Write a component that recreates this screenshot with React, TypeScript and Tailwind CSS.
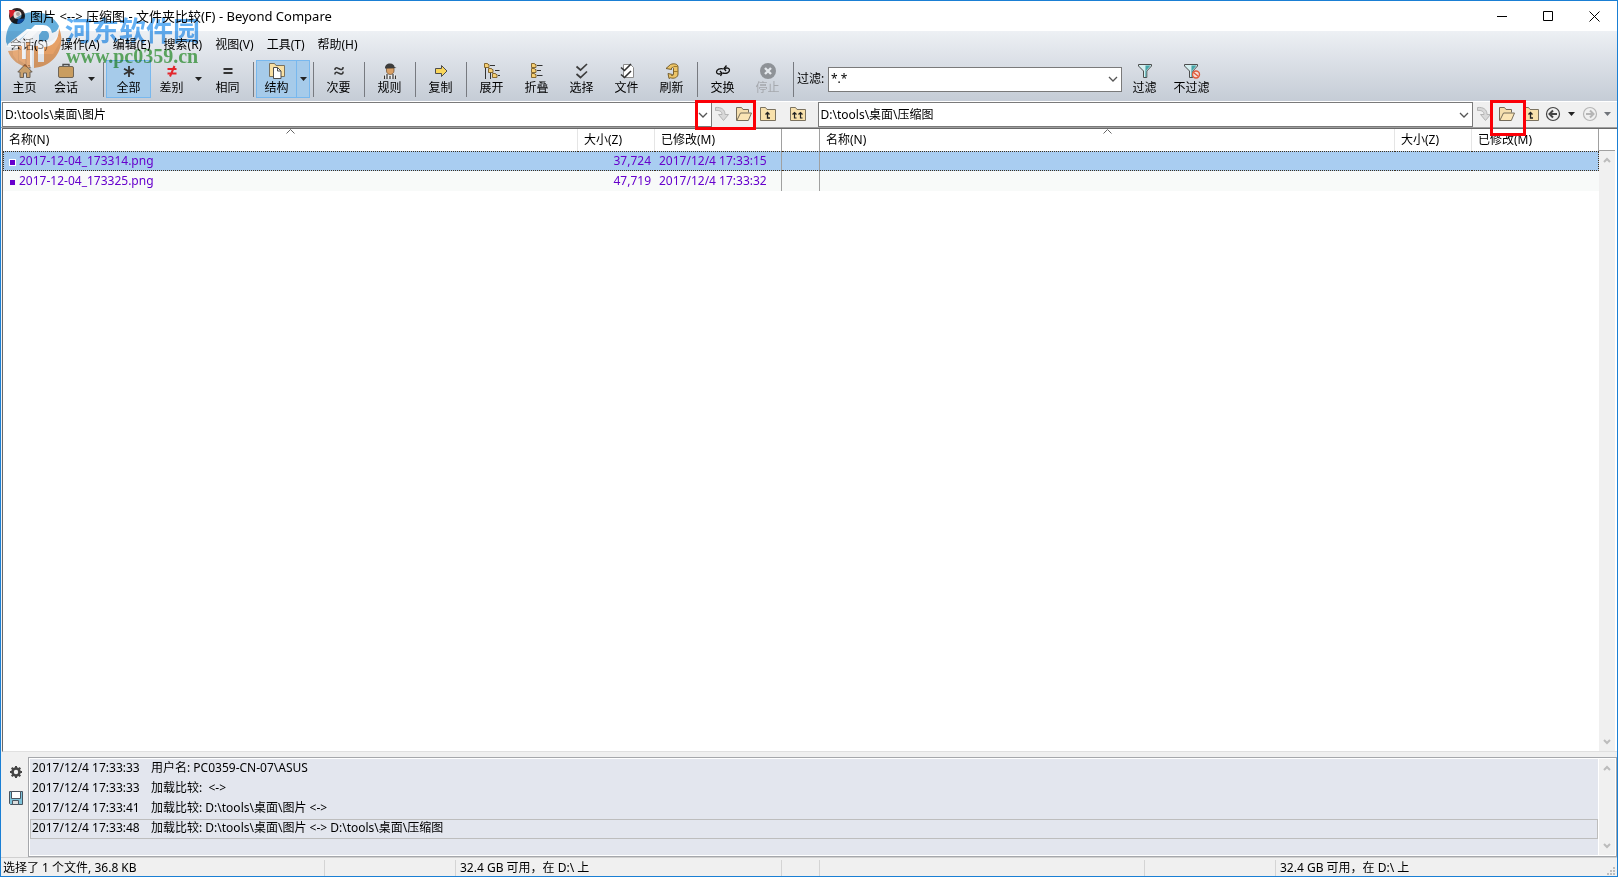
import React from "react";

const OUT = "#4d4d4d";

function Svg({ w = 16, h = 16, children }: { w?: number; h?: number; children: React.ReactNode }) {
  return (
    <svg width={w} height={h} viewBox={`0 0 ${w} ${h}`} fill="none" aria-hidden="true" className="shrink-0">
      {children}
    </svg>
  );
}

const icons = {
  home: (
    <Svg>
      <path d="M8 1.5L15.2 9H13v5.500H9.500V10h-3v4.500H3V9H.8z" fill="#c9a06c" stroke="#6a6055" />
      <path d="M11 2.500h2v3" stroke="#6a6055" />
    </Svg>
  ),
  briefcase: (
    <Svg>
      <path d="M5 3.500V1.500h6v2" stroke={OUT} strokeWidth="1.400" />
      <rect x=".5" y="3.500" width="15" height="11" rx="1.500" fill="#c99d60" stroke="#6f6557" />
    </Svg>
  ),
  star: (
    <Svg>
      <path d="M8 3v11M3 5.800l10 5.400M13 5.800L3 11.200" stroke="#333" strokeWidth="1.800" />
    </Svg>
  ),
  notEqual: (
    <Svg>
      <path d="M3.500 6h9M3.500 10.500h9M10.500 3L6 13.500" stroke="#e3262c" strokeWidth="2" />
    </Svg>
  ),
  equal: (
    <Svg>
      <path d="M3.500 6h9M3.500 10h9" stroke="#333" strokeWidth="2" />
    </Svg>
  ),
  structure: (
    <Svg>
      <path d="M.5 13.500v-13h5l1.500 2h8.500v11z" fill="#f8dfa2" stroke="#7b725f" />
      <path d="M4.500 4.500h4l3.500 3.500v7.500H4.500z" fill="#fff" stroke={OUT} />
      <path d="M8.500 4.500V8H12" stroke={OUT} />
    </Svg>
  ),
  approx: (
    <Svg>
      <path
        d="M4 7V6c0-1 1.500-1.500 2.800-.8l2.400 1c1.300.5 2.800 0 2.800-1.200V4M4 11.500v-1c0-1 1.500-1.500 2.800-.8l2.400 1c1.300.5 2.800 0 2.800-1.200v-1"
        stroke="#333"
        strokeWidth="1.500"
      />
    </Svg>
  ),
  referee: (
    <Svg>
      <path d="M4.500 5H12v3c0 2-2 3.500-3.800 3.500S4.500 10 4.500 8z" fill="#d9a066" stroke="#6b4b2a" strokeWidth=".7" />
      <path d="M3 5.500C3 2 5 .5 8 .5s4.500 2 4.500 3.500l2 1z" fill="#3c3c3c" />
      <path d="M.5 15.500c0-3 2-4.500 4.500-4.500l3 2.500 3-2.500c2.500 0 4.500 1.500 4.500 4.500z" fill="#f2f2f2" />
      <path d="M2.500 16v-3.500M5 16v-5M8 16v-3M11 16v-5M13.500 16v-3.500" stroke="#333" strokeWidth="1.200" />
    </Svg>
  ),
  copy: (
    <Svg>
      <path d="M2.500 5.500h6v-3L14 8l-5.500 5.500v-3h-6z" fill="#f9d559" stroke={OUT} />
    </Svg>
  ),
  expand: (
    <Svg>
      <path d="M1.500 4v12M6.500 9v7M6 2.500h5M11 7.500h4.500M14 12.500h2" stroke="#333" />
      <path d="M.5.5h3l.5 1h1v3H.5zM4.500 5.500h3l.5 1h1v3H4.500zM8.500 10.500h3l.5 1h1v3H8.500z" fill="#f6cf72" stroke="#7a5c25" strokeWidth=".9" />
    </Svg>
  ),
  collapse: (
    <Svg>
      <path d="M8 2.500h5.500M8 7.500h4M8 12.500h5.500" stroke="#333" />
      <path d="M2.500.5h3l.5 1h1v3H2.500zM2.500 5.500h3l.5 1h1v3H2.500zM2.500 10.500h3l.5 1h1v3H2.500z" fill="#f6cf72" stroke="#7a5c25" strokeWidth=".9" />
    </Svg>
  ),
  select: (
    <Svg>
      <path d="M2.500 3.500l4 3.500L13 1M2.500 11l4 3.500L13 8.500" stroke="#3c3c3c" strokeWidth="1.700" />
    </Svg>
  ),
  files: (
    <Svg>
      <path d="M4.500 1.500h7l3 3v10h-10z" fill="#fff" stroke="#8c8c8c" />
      <path d="M2 4.500l3.500 3L12 1M2 11.500l3.500 3L12 8" stroke="#333" strokeWidth="1.600" />
    </Svg>
  ),
  refresh: (
    <Svg>
      <path
        d="M2 5.500L6.500 1.500C10 0 14 1 14 4v7c0 3.500-4 5-7.500 3.800L5 15.500l-1-5 4.500 1-1 1c1.500.3 2-.5 2-1.500V5.500C9.500 4.500 8.500 4 7.500 5v1.500z"
        fill="#ecc468"
        stroke="#6b5423"
        strokeWidth=".9"
      />
      <path d="M9.500 3.500h4M9.800 8.500h4" stroke="#a07c2e" />
    </Svg>
  ),
  swap: (
    <Svg>
      <path d="M8.500 6C5 5 1.500 6.500 1.500 9c0 2 2.500 2.500 5 1.500" stroke="#111" strokeWidth="1.300" />
      <path d="M5 8l2 2.300L5.500 13" stroke="#111" strokeWidth="1.300" />
      <path d="M7.500 10c4 1 7-.5 7-3 0-2-2.500-2.500-5-1.500" stroke="#111" strokeWidth="1.300" />
      <path d="M11 8L9 5.500 11.500 2.500" stroke="#111" strokeWidth="1.300" />
    </Svg>
  ),
  stop: (
    <Svg>
      <circle cx="8" cy="8" r="8" fill="#8e9297" />
      <path d="M5 5l6 6M11 5l-6 6" stroke="#e4e8ec" strokeWidth="2.400" />
    </Svg>
  ),
  filter: (
    <Svg>
      <path d="M1.500 1.500h13V3L9.800 8v6.500H6.500V8L1.500 3z" fill="#d5eff0" stroke={OUT} />
      <path d="M8.500 2.500h5L9.300 7.500V14h-1z" fill="#45a5a8" />
    </Svg>
  ),
  noFilter: (
    <Svg w={18}>
      <path d="M1.500 1.500h13V3L9.800 8v6.500H6.500V8L1.500 3z" fill="#d5eff0" stroke={OUT} />
      <path d="M8.500 2.500h5L9.300 7.500V14h-1z" fill="#45a5a8" />
      <circle cx="13" cy="11.500" r="3.500" fill="#f6dcd4" stroke="#df5b3a" strokeWidth="1.400" />
      <path d="M10.500 9.500l5 4" stroke="#df5b3a" strokeWidth="1.400" />
    </Svg>
  ),
};

const Chevron = () => (
  <Svg w={10} h={6}>
    <path d="M1 1l4 4 4-4" stroke="#555" strokeWidth="1.300" />
  </Svg>
);

const ScrollMark = ({ up = false }: { up?: boolean }) => (
  <Svg w={8} h={6}>
    <path d={up ? "M1 5l3-3 3 3" : "M1 1l3 3 3-3"} stroke="#bcbcbc" strokeWidth="2" />
  </Svg>
);

const Triangle = ({ color = "#222" }: { color?: string }) => (
  <Svg w={7} h={4}>
    <path d="M0 0h7L3.500 4z" fill={color} />
  </Svg>
);

const JumpIcon = () => (
  <Svg>
    <path d="M1.500 1.500c6-.5 9.500 2 9.500 7h3.500l-5 6-5-6H8c0-3-2.500-4.500-6.500-4z" fill="#d9d9d9" stroke="#b4b4b4" />
  </Svg>
);

const OpenIcon = () => (
  <Svg>
    <path d="M.5 14.500v-13h5l1.500 2h5.500v3" fill="#f5dfae" stroke="#756c5a" />
    <path d="M.8 14.500L4.500 7h11l-3.200 7.500z" fill="#fbe5b5" stroke="#756c5a" />
  </Svg>
);

const UpIcon = ({ double = false }: { double?: boolean }) => (
  <Svg>
    <path d="M.5 14.500v-13h5l1.500 2h8.500v11z" fill="#f8e1ac" stroke="#7b725f" />
    {double ? (
      <path d="M4.500 7v5h2M2.500 8.500l2-2 2 2M10.500 7v5h2M8.500 8.500l2-2 2 2" stroke="#222" strokeWidth="1.200" />
    ) : (
      <path d="M7.500 6.500V12H10M5.500 8.500l2-2 2 2" stroke="#222" strokeWidth="1.300" />
    )}
  </Svg>
);

const RoundArrow = ({ color, back = false }: { color: string; back?: boolean }) => (
  <Svg>
    <circle cx="8" cy="8" r="6.500" stroke={color} strokeWidth="1.200" />
    <path d={back ? "M12 8H6M8 4.500L4.500 8 8 11.500" : "M4 8h6M8 4.500L11.500 8 8 11.500"} stroke={color} strokeWidth="2" />
  </Svg>
);

function Tool({ icon, label, on = false, off = false }: { icon: React.ReactNode; label: string; on?: boolean; off?: boolean }) {
  return (
    <button
      disabled={off}
      className={`flex h-[38px] w-[45px] shrink-0 flex-col items-center border pt-[2px] ${
        on ? "border-[#78b8ee] bg-[#a6cbea]" : "border-transparent"
      } ${off ? "text-[#a5a8ad]" : ""}`}
    >
      {icon}
      <span className="whitespace-nowrap leading-[18px]">{label}</span>
    </button>
  );
}

function SplitTool({ icon, label, on = false, narrow = false }: { icon: React.ReactNode; label: string; on?: boolean; narrow?: boolean }) {
  const edge = on ? "border-[#78b8ee] bg-[#a6cbea]" : "border-transparent";
  return (
    <div className={`flex shrink-0 ${narrow ? "pr-[2px]" : ""}`}>
      <button className={`flex h-[38px] flex-col items-center border pt-[2px] ${narrow ? "w-[38px]" : "w-[41px]"} ${edge}`}>
        {icon}
        <span className="whitespace-nowrap leading-[18px]">{label}</span>
      </button>
      <button aria-label={`${label}选项`} className={`flex h-[38px] w-[13px] items-center justify-center border border-l-0 ${edge}`}>
        <Triangle />
      </button>
    </div>
  );
}

const Sep = () => (
  <div className="flex w-[6px] shrink-0 justify-center">
    <div className="h-[35px] w-px bg-[#777a80]" />
  </div>
);

function Combo({ label, value }: { label: string; value: string }) {
  return (
    <div className="flex h-[25px] min-w-0 flex-1 items-center border border-[#7a7a7a] bg-white">
      <input aria-label={label} defaultValue={value} className="h-full min-w-0 flex-1 bg-transparent pb-[2px] pl-[2px] outline-none" />
      <button aria-label={`${label}列表`} className="flex h-full w-4 items-center justify-center">
        <Chevron />
      </button>
    </div>
  );
}

function IconButton({ label, className, children }: { label: string; className: string; children: React.ReactNode }) {
  return (
    <button aria-label={label} className={`flex h-6 shrink-0 items-center justify-center ${className}`}>
      {children}
    </button>
  );
}

function ScrollBar() {
  return (
    <div className="flex w-4 shrink-0 flex-col justify-between bg-[#f0f0f0]">
      <button aria-label="向上滚动" className="flex h-[18px] items-center justify-center">
        <ScrollMark up />
      </button>
      <button aria-label="向下滚动" className="flex h-[18px] items-center justify-center">
        <ScrollMark />
      </button>
    </div>
  );
}

const files = [
  { name: "2017-12-04_173314.png", size: "37,724", date: "2017/12/4 17:33:15", selected: true },
  { name: "2017-12-04_173325.png", size: "47,719", date: "2017/12/4 17:33:32", selected: false },
];

const log = [
  ["2017/12/4 17:33:33", "用户名: PC0359-CN-07\\ASUS"],
  ["2017/12/4 17:33:33", "加载比较:  <->"],
  ["2017/12/4 17:33:41", "加载比较: D:\\tools\\桌面\\图片 <->"],
  ["2017/12/4 17:33:48", "加载比较: D:\\tools\\桌面\\图片 <-> D:\\tools\\桌面\\压缩图"],
];

const menus = ["会话(S)", "操作(A)", "编辑(E)", "搜索(R)", "视图(V)", "工具(T)", "帮助(H)"];

function NameHead() {
  return (
    <th className="relative border-r border-[#e5e5e5] pl-[6px] text-left font-normal">
      名称(N)
      <span className="absolute inset-x-0 top-0 flex justify-center">
        <Svg w={9} h={5}>
          <path d="M.5 4.500l4-4 4 4" stroke="#666" />
        </Svg>
      </span>
    </th>
  );
}

function Watermark() {
  return (
    <>
      <svg width="58" height="58" viewBox="0 0 58 58" aria-hidden="true" className="pointer-events-none absolute left-[4px] top-[10px]">
        <path d="M19 26l-6 5h7v22l-6-4V36H1L19 18l16 0-8 8v30h-5V27z" fill="#fff" opacity=".5" />
        <path d="M8 36h5v15l-5-7zM33 30c10 3 16 0 20-6l3 5-8 14H33z" fill="#fff" opacity=".5" />
      </svg>
      <div className="pointer-events-none absolute left-[4px] top-[10px] flex opacity-80 mix-blend-multiply">
        <svg width="58" height="58" viewBox="0 0 58 58" aria-hidden="true">
          <path d="M1 31C0 12 14 1 29 1c11 0 20 5 25 14-1 4-3 6-7 7-1-5-4-8-9-8h-8L15 29H9L3 35z" fill="#3f9bd4" />
          <path d="M22 18h5L13 30 4 37c-1-1-1-3-1-4z" fill="#fff" />
          <path d="M37 20h3c3 0 4 2 4 5s-2 5-6 5h-4V24z" fill="#3f9bd4" />
          <path d="M54 17c8 19-5 39-25 40V35h4v16h6V36c8 0 15-6 15-19z" fill="#f09245" />
          <path d="M3 40l10-1v-4h4v13h4V31h4v26C14 55 6 49 3 40z" fill="#f3a05c" />
        </svg>
        <div className="flex flex-col pl-[2px] pt-[4px]">
          <span className="whitespace-nowrap font-['Noto_Sans_CJK_SC',sans-serif] text-[27px] font-bold leading-[30px] text-[#3c9cf0]">
            河东软件园
          </span>
          <span className="whitespace-nowrap pl-px font-['Liberation_Serif',serif] text-[20px] font-bold leading-[22px] text-[#3fa53f]">
            www.pc0359.cn
          </span>
        </div>
      </div>
    </>
  );
}

export default function App() {
  return (
    <div className="relative flex min-h-screen flex-col border border-[#1a7fd4] bg-[#f0f0f0] font-['Noto_Sans','Noto_Sans_CJK_SC',sans-serif] text-[12px] leading-[18px] text-black">
      <header className="flex h-[30px] shrink-0 items-center bg-white pl-2">
        <Svg>
          <circle cx="8" cy="8" r="8" fill="#2c2223" />
          <path d="M0 2h6c1 3-1 5-5 8z" fill="#d4232c" />
          <path d="M8 15.500c4 .5 7-2 7.500-5L9 11z" fill="#1d6fb8" />
          <circle cx="8.500" cy="7" r="4" fill="#e8e2dc" />
          <circle cx="9" cy="6" r="2" fill="#a8a09a" />
        </Svg>
        <h1 className="flex-1 whitespace-nowrap pl-[5px] text-[13px]">图片 &lt;--&gt; 压缩图 - 文件夹比较(F) - Beyond Compare</h1>
        <IconButton label="最小化" className="w-[46px]">
          <Svg w={11} h={11}><path d="M0 5.500h10" stroke="#000" /></Svg>
        </IconButton>
        <IconButton label="最大化" className="w-[46px]">
          <Svg w={11} h={11}><path d="M.5.5h9v9h-9z" stroke="#000" /></Svg>
        </IconButton>
        <IconButton label="关闭" className="w-[46px]">
          <Svg w={11} h={11}><path d="M.5.5l10 10M10.500.5l-10 10" stroke="#000" /></Svg>
        </IconButton>
      </header>

      <div className="shrink-0 border-b border-white bg-gradient-to-b from-[#edf0f4] to-[#c5ccd6]">
        <nav className="flex h-[28px] items-center gap-[13px] pl-[9px]">
          {menus.map((m) => (
            <button key={m} className="whitespace-nowrap">{m}</button>
          ))}
        </nav>
        <div className="flex h-[42px] items-center pb-[2px] pl-px">
          <Tool icon={icons.home} label="主页" />
          <SplitTool icon={icons.briefcase} label="会话" narrow />
          <Sep />
          <Tool icon={icons.star} label="全部" on />
          <SplitTool icon={icons.notEqual} label="差别" />
          <Tool icon={icons.equal} label="相同" />
          <Sep />
          <SplitTool icon={icons.structure} label="结构" on />
          <Sep />
          <Tool icon={icons.approx} label="次要" />
          <Sep />
          <Tool icon={icons.referee} label="规则" />
          <Sep />
          <Tool icon={icons.copy} label="复制" />
          <Sep />
          <Tool icon={icons.expand} label="展开" />
          <Tool icon={icons.collapse} label="折叠" />
          <Tool icon={icons.select} label="选择" />
          <Tool icon={icons.files} label="文件" />
          <Tool icon={icons.refresh} label="刷新" />
          <Sep />
          <Tool icon={icons.swap} label="交换" />
          <Tool icon={icons.stop} label="停止" off />
          <Sep />
          <span className="w-[32px] shrink-0 whitespace-nowrap pl-px">过滤:</span>
          <div className="flex w-[294px]">
            <Combo label="过滤" value="*.*" />
          </div>
          <Tool icon={icons.filter} label="过滤" />
          <div className="w-[2px]" />
          <Tool icon={icons.noFilter} label="不过滤" />
        </div>
      </div>

      <div className="flex h-[26px] shrink-0 border-b border-[#a0a0a0] pl-px">
        <div className="flex min-w-0 grow basis-4">
          <Combo label="左侧路径" value={"D:\\tools\\桌面\\图片"} />
          <div className="flex w-[106px] shrink-0">
            <IconButton label="转到" className="w-[20px]"><JumpIcon /></IconButton>
            <IconButton label="浏览" className="w-[25px]"><OpenIcon /></IconButton>
            <IconButton label="向上" className="w-[23px]"><UpIcon /></IconButton>
            <IconButton label="两侧向上" className="w-[37px]"><UpIcon double /></IconButton>
          </div>
        </div>
        <div className="flex min-w-0 grow basis-0">
          <Combo label="右侧路径" value={"D:\\tools\\桌面\\压缩图"} />
          <div className="flex w-[144px] shrink-0 pl-[2px]">
            <IconButton label="转到" className="w-[18px]"><JumpIcon /></IconButton>
            <IconButton label="浏览" className="w-[28px]"><OpenIcon /></IconButton>
            <IconButton label="向上" className="w-[20px]"><UpIcon /></IconButton>
            <IconButton label="后退" className="w-[24px]"><RoundArrow back color="#444" /></IconButton>
            <IconButton label="后退历史" className="w-[12px]"><Triangle /></IconButton>
            <IconButton label="前进" className="w-[26px]"><RoundArrow color="#b5b5b5" /></IconButton>
            <IconButton label="前进历史" className="w-[9px]"><Triangle color="#70747a" /></IconButton>
          </div>
        </div>
      </div>

      <main className="ml-px flex min-h-[200px] flex-1 border-b border-l border-t border-b-[#e0e0e0] border-l-[#696969] border-t-[#696969] bg-white">
        <div className="min-w-0 flex-1">
          <table className="w-full table-fixed border-separate border-spacing-0">
            <colgroup>
              <col />
              <col className="w-[77px]" />
              <col className="w-[127px]" />
              <col className="w-[38px]" />
              <col />
              <col className="w-[77px]" />
              <col className="w-[127px]" />
            </colgroup>
            <thead>
              <tr className="h-[22px]">
                <NameHead />
                <th className="border-r border-[#e5e5e5] pl-[6px] text-left font-normal">大小(Z)</th>
                <th className="border-r border-[#a0a0a0] pl-[6px] text-left font-normal">已修改(M)</th>
                <th className="border-r border-[#a0a0a0]" />
                <NameHead />
                <th className="border-r border-[#e5e5e5] pl-[6px] text-left font-normal">大小(Z)</th>
                <th className="border-r border-[#a0a0a0] pl-[6px] text-left font-normal">已修改(M)</th>
              </tr>
            </thead>
            <tbody className="text-[#6600cc]">
              {files.map((f) => {
                const edge = f.selected ? "border-y border-y-[#40301c] [border-top-style:dotted] [border-bottom-style:dotted]" : "";
                return (
                  <tr key={f.name} className={f.selected ? "h-[20px] bg-[#a9cdf1]" : "h-[20px] bg-[#f8faf9]"}>
                    <td className={`p-0 ${edge} ${f.selected ? "border-l border-l-[#40301c] [border-left-style:dotted]" : "border-l border-l-transparent"}`}>
                      <div className="flex items-center gap-[3px] pl-[5px]">
                        <span className={`mt-[2px] size-[7px] border bg-[#6600cc] ${f.selected ? "border-white" : "border-[#f8faf9]"}`} />
                        {f.name}
                      </div>
                    </td>
                    <td className={`p-0 pr-1 text-right ${edge}`}>{f.size}</td>
                    <td className={`border-r border-r-[#a0a0a0] p-0 pl-1 ${edge}`}>{f.date}</td>
                    <td className={`border-r border-r-[#a0a0a0] p-0 ${edge}`} />
                    <td className={`p-0 ${edge}`} />
                    <td className={`p-0 ${edge}`} />
                    <td className={`p-0 ${edge} ${f.selected ? "border-r border-r-[#40301c] [border-right-style:dotted]" : ""}`} />
                  </tr>
                );
              })}
            </tbody>
          </table>
        </div>
        <div className="mr-[2px] flex w-4 shrink-0 flex-col">
          <div className="h-[22px] shrink-0 border-b border-[#a0a0a0]" />
          <div className="flex flex-1"><ScrollBar /></div>
        </div>
      </main>

      <section className="mt-[5px] flex h-[100px] shrink-0">
        <div className="flex w-[27px] shrink-0 flex-col items-center gap-[2px] pl-[2px] pt-[3px]">
          <IconButton label="设置" className="w-6">
            <Svg w={14} h={14}>
              <circle cx="7" cy="7" r="3.500" stroke="#444" strokeWidth="2.600" />
              <path d="M7 1v2M7 11v2M1 7h2M11 7h2M2.700 2.700l1.500 1.500M9.800 9.800l1.500 1.500M11.300 2.700L9.800 4.200M4.200 9.800l-1.500 1.500" stroke="#444" strokeWidth="2" />
            </Svg>
          </IconButton>
          <IconButton label="保存" className="w-6">
            <Svg w={14} h={14}>
              <path d="M.5.5h13v13h-12l-1-1z" fill="#7dc3da" stroke="#4a5560" />
              <path d="M2.500.5h9v7h-9z" fill="#fff" stroke="#4a5560" />
              <path d="M3.500 9.500h6v4h-6z" fill="#ddd" stroke="#4a5560" />
            </Svg>
          </IconButton>
        </div>
        <div className="flex min-w-0 flex-1 border border-[#a5a7ab] bg-white p-px">
          <ol className="mr-px min-w-0 flex-1 bg-[#e3e6ee]">
            {log.map(([time, text], i) => (
              <li
                key={i}
                className={`flex h-[20px] items-center whitespace-pre border pl-px leading-[16px] ${i === 3 ? "border-[#bdbdbd]" : "border-transparent"} pb-[2px]`}
              >
                <span className="w-[119px] shrink-0">{time}</span>
                {text}
              </li>
            ))}
          </ol>
          <ScrollBar />
        </div>
      </section>

      <footer className="flex h-[19px] shrink-0 items-end whitespace-nowrap border-t border-[#d0d0d0]">
        <div className="min-w-0 grow basis-0 border-r border-[#d4d4d4] pl-[2px] leading-[16px]">选择了 1 个文件, 36.8 KB</div>
        <div className="h-4 w-[131px] shrink-0 border-r border-[#d4d4d4]" />
        <div className="min-w-0 grow basis-1 border-r border-[#d4d4d4] pl-1 leading-[16px]">32.4 GB 可用，在 D:\ 上</div>
        <div className="h-4 w-[38px] shrink-0 border-r border-[#d4d4d4]" />
        <div className="h-4 min-w-0 grow basis-1 border-r border-[#d4d4d4]" />
        <div className="h-4 w-[131px] shrink-0 border-r border-[#d4d4d4]" />
        <div className="flex min-w-0 grow basis-5 items-end justify-between pl-1 pr-px leading-[16px]">
          32.4 GB 可用，在 D:\ 上
          <Svg w={9} h={9}>
            <path d="M6 0h2v2H6zM3 3h2v2H3zM6 3h2v2H6zM0 6h2v2H0zM3 6h2v2H3zM6 6h2v2H6z" fill="#bdbdbd" />
          </Svg>
        </div>
      </footer>

      <Watermark />
      <div className="pointer-events-none absolute left-[694px] top-[99px] h-[30px] w-[61px] border-[3px] border-[#fb0007]" />
      <div className="pointer-events-none absolute right-[91px] top-[99px] h-[36px] w-[36px] border-[3px] border-[#fb0007]" />
    </div>
  );
}
